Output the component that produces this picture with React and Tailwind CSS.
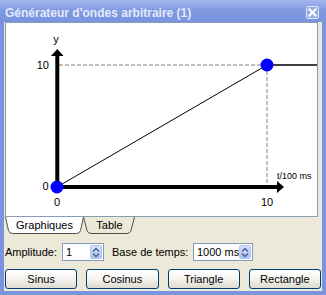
import React from "react";

function CloseBtn() {
  return (
    <div className="w-[13px] h-[13px] rounded-[2px] border border-[#dfe7fb] bg-[#98ace6] flex items-center justify-center">
      <svg width="11" height="11" viewBox="0 0 11 11">
        <path d="M2.5 2.5 L8.5 8.5 M8.5 2.5 L2.5 8.5" stroke="#ffffff" strokeWidth="2" strokeLinecap="square" />
      </svg>
    </div>
  );
}

function SpinButton() {
  return (
    <div className="w-[12px] shrink-0 h-full rounded-[2px] border border-[#b7c7f0] bg-gradient-to-b from-[#d6e1fd] to-[#aac0f5] flex flex-col items-center justify-center gap-[1px]">
      <svg width="8" height="5" viewBox="0 0 8 5">
        <path d="M1 4.5 L4 1.5 L7 4.5" stroke="#4d6185" strokeWidth="1.4" fill="none" />
      </svg>
      <svg width="8" height="5" viewBox="0 0 8 5">
        <path d="M1 0.5 L4 3.5 L7 0.5" stroke="#4d6185" strokeWidth="1.4" fill="none" />
      </svg>
    </div>
  );
}

function SpinBox({ value, width }) {
  return (
    <div className={`${width} h-full border border-[#7f9db9] bg-white flex items-stretch p-px`}>
      <span className="flex-1 min-w-0 flex items-center pl-[2px] leading-none whitespace-nowrap overflow-hidden">{value}</span>
      <SpinButton />
    </div>
  );
}

function XpButton({ label }) {
  return (
    <div className="h-full rounded-[3px] border border-[#003c74] bg-gradient-to-b from-[#ffffff] via-[#f4f3ee] to-[#dedbcf] flex items-center justify-center leading-none">
      {label}
    </div>
  );
}

function Chart() {
  const ff = "Liberation Sans, Arial, sans-serif";
  return (
    <svg width="311" height="193" viewBox="6 23 311 193" className="block">
      <line x1="59" y1="65" x2="267" y2="65" stroke="#808080" strokeDasharray="4 2" />
      <line x1="267" y1="65" x2="267" y2="191" stroke="#808080" strokeDasharray="4 2" />
      <line x1="57" y1="187" x2="267" y2="65" stroke="#000" strokeWidth="1" />
      <line x1="267" y1="65" x2="320" y2="65" stroke="#000" strokeWidth="1.5" />
      <line x1="57.3" y1="55" x2="57.3" y2="189" stroke="#000" strokeWidth="4" />
      <line x1="55" y1="187" x2="278" y2="187" stroke="#000" strokeWidth="4" />
      <polygon points="57.3,49 51,56 63.6,56" fill="#000" />
      <polygon points="277,181 284,187 277,193" fill="#000" />
      <circle cx="57" cy="187" r="6.5" fill="#0000ff" />
      <circle cx="267" cy="65" r="6.5" fill="#0000ff" />
      <text x="56" y="43" fontSize="11" textAnchor="middle" fontFamily={ff}>y</text>
      <text x="49" y="69" fontSize="11" textAnchor="end" fontFamily={ff}>10</text>
      <text x="48.5" y="190" fontSize="11" textAnchor="end" fontFamily={ff}>0</text>
      <text x="57" y="206" fontSize="11" textAnchor="middle" fontFamily={ff}>0</text>
      <text x="267" y="206" fontSize="11" textAnchor="middle" fontFamily={ff}>10</text>
      <text x="277" y="179" fontSize="9" fontFamily={ff}>t/100 ms</text>
    </svg>
  );
}

function Tabs() {
  return (
    <div className="h-[18px] flex ml-[1px] shrink-0">
      <div className="relative z-10 w-[79px] h-full flex items-center justify-center">
        <svg width="79" height="18" viewBox="0 0 79 18" className="absolute inset-0">
          <path d="M0.5 -1 L0.5 0 L3.5 13.5 Q4.5 16.5 7.5 16.5 L71.5 16.5 Q74.5 16.5 75.5 13.5 L78.5 0 L78.5 -1" fill="#ffffff" stroke="#4b4b4b" strokeWidth="1" />
        </svg>
        <span className="relative leading-none pb-[1px]">Graphiques</span>
      </div>
      <div className="relative -ml-[1px] w-[52px] h-full flex items-center justify-center">
        <svg width="52" height="18" viewBox="0 0 52 18" className="absolute inset-0">
          <path d="M0.5 0 L4 13.5 Q5 16.5 8 16.5 L44 16.5 Q47 16.5 48 13.5 L51.5 0" fill="#ece9d8" stroke="#4b4b4b" strokeWidth="1" />
        </svg>
        <span className="relative leading-none pb-[1px] pl-[1px]">Table</span>
      </div>
    </div>
  );
}

export default function App() {
  return (
    <div className="w-[326px] h-[295px] bg-[#7b94df] flex flex-col font-['Liberation_Sans',Arial,sans-serif] text-[11px] text-black overflow-hidden">
      <div className="h-[22px] shrink-0 flex items-center justify-between pl-[5px] pr-[7px] pt-[3px] bg-gradient-to-b from-[#a3b6ee] via-[#7f98e1] to-[#7b94df]">
        <span className="text-[12px] font-bold text-[#e2eafb] leading-none whitespace-nowrap">Générateur d'ondes arbitraire (1)</span>
        <CloseBtn />
      </div>
      <div className="flex-1 mx-[4px] mb-[4px] bg-[#ece9d8] flex flex-col">
        <div className="ml-[1px] w-[313px] h-[195px] shrink-0 border border-[#8a9bb5] bg-white">
          <Chart />
        </div>
        <Tabs />
        <div className="mt-[8px] h-[18px] flex items-center pl-[1px] whitespace-nowrap">
          <span className="w-[57px] shrink-0 leading-none">Amplitude:</span>
          <SpinBox value="1" width="w-[42px] shrink-0" />
          <span className="ml-[8px] w-[81px] shrink-0 leading-none">Base de temps:</span>
          <SpinBox value="1000 ms" width="w-[60px] shrink-0" />
        </div>
        <div className="mt-[8px] h-[20px] grid grid-cols-4 gap-[9px] px-[1px]">
          <XpButton label="Sinus" />
          <XpButton label="Cosinus" />
          <XpButton label="Triangle" />
          <XpButton label="Rectangle" />
        </div>
      </div>
    </div>
  );
}
